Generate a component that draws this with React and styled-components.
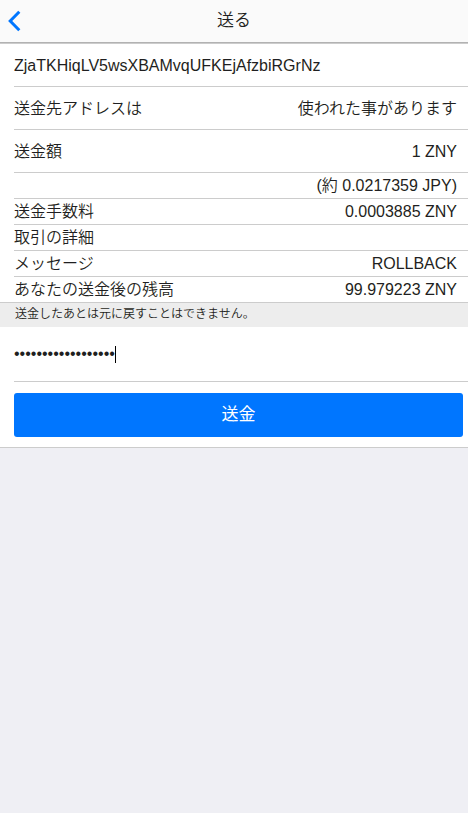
import React, { useState } from "react";
import styled, { createGlobalStyle } from "styled-components";

const GlobalStyle = createGlobalStyle`
  *, *::before, *::after { box-sizing: border-box; }
  body {
    margin: 0;
    background: #efeff4;
    color: #1f1f21;
    font-family: "Liberation Sans", "Noto Sans CJK JP", sans-serif;
    font-size: 16px;
    font-weight: 350;
  }
`;

const Toolbar = styled.header`
  display: grid;
  grid-template-columns: 44px 1fr 44px;
  align-items: center;
  height: 43px;
  background: #fafafa;
  border-bottom: 1px solid #b2b2b2;
`;

const BackButton = styled.button`
  display: flex;
  align-items: center;
  height: 42px;
  padding: 0 8px;
  border: 0;
  background: none;
  color: #0076ff;
  cursor: pointer;
`;

const Title = styled.h1`
  margin: 0;
  font-size: 17px;
  font-weight: 350;
  line-height: 42px;
  text-align: center;
`;

const Panel = styled.form`
  margin: 0;
  background: #fff;
  border-top: 1px solid #ccc;
  border-bottom: 1px solid #ccc;
`;

const Details = styled.dl`
  margin: 0;
  padding-left: 14px;
`;

const Row = styled.div`
  display: flex;
  justify-content: space-between;
  height: ${(p) => (p.$tall ? 43 : 26)}px;
  padding-right: 11px;
  line-height: ${(p) => (p.$tall ? 44 : 25)}px;
  border-bottom: 1px solid #ccc;

  &:last-child {
    height: 25px;
    border-bottom: 0;
  }
`;

const Term = styled.dt`
  white-space: nowrap;
`;

const Value = styled.dd`
  margin: 0;
  white-space: nowrap;
`;

const Notice = styled.p`
  margin: 0;
  padding-left: 15px;
  height: 25px;
  border-top: 1px solid #ccc;
  background: #ededed;
  font-size: 12px;
  line-height: 22px;
`;

const PasswordField = styled.label`
  display: flex;
  align-items: center;
  height: 55px;
  margin-left: 14px;
  border-bottom: 1px solid #ccc;
`;

const PasswordInput = styled.input`
  field-sizing: content;
  max-width: 95%;
  height: 31px;
  padding: 0;
  border: 0;
  outline: 0;
  background: transparent;
  color: inherit;
  caret-color: transparent;
  font: inherit;
`;

const Caret = styled.span`
  width: 1px;
  height: 17px;
  background: #000;
`;

const Actions = styled.div`
  padding: 11px 5px 10px 14px;
`;

const SendButton = styled.button`
  display: block;
  width: 100%;
  height: 44px;
  padding: 0 0 5px;
  border: 0;
  border-radius: 3px;
  background: #0076ff;
  color: #fff;
  font: inherit;
  font-size: 17px;
  font-weight: 400;
  cursor: pointer;
`;

const rows = [
  { term: "ZjaTKHiqLV5wsXBAMvqUFKEjAfzbiRGrNz", tall: true },
  { term: "送金先アドレスは", value: "使われた事があります", tall: true },
  { term: "送金額", value: "1 ZNY", tall: true },
  { term: "", value: "(約 0.0217359 JPY)" },
  { term: "送金手数料", value: "0.0003885 ZNY" },
  { term: "取引の詳細", value: "" },
  { term: "メッセージ", value: "ROLLBACK" },
  { term: "あなたの送金後の残高", value: "99.979223 ZNY" },
];

export default function App() {
  const [password, setPassword] = useState("x".repeat(18));

  return (
    <>
      <GlobalStyle />
      <Toolbar>
        <BackButton type="button" aria-label="戻る">
          <svg width="13" height="22" viewBox="0 0 13 22" fill="none" aria-hidden="true">
            <path d="M11.3 1.7 2.2 11l9.1 9.3" stroke="currentColor" strokeWidth="3" />
          </svg>
        </BackButton>
        <Title>送る</Title>
      </Toolbar>
      <Panel onSubmit={(e) => e.preventDefault()}>
        <Details>
          {rows.map((row, i) => (
            <Row key={i} $tall={row.tall}>
              <Term>{row.term}</Term>
              <Value>{row.value}</Value>
            </Row>
          ))}
        </Details>
        <Notice>送金したあとは元に戻すことはできません。</Notice>
        <PasswordField>
          <PasswordInput
            type="password"
            aria-label="パスワード"
            value={password}
            onChange={(e) => setPassword(e.target.value)}
          />
          <Caret />
        </PasswordField>
        <Actions>
          <SendButton type="submit">送金</SendButton>
        </Actions>
      </Panel>
    </>
  );
}
